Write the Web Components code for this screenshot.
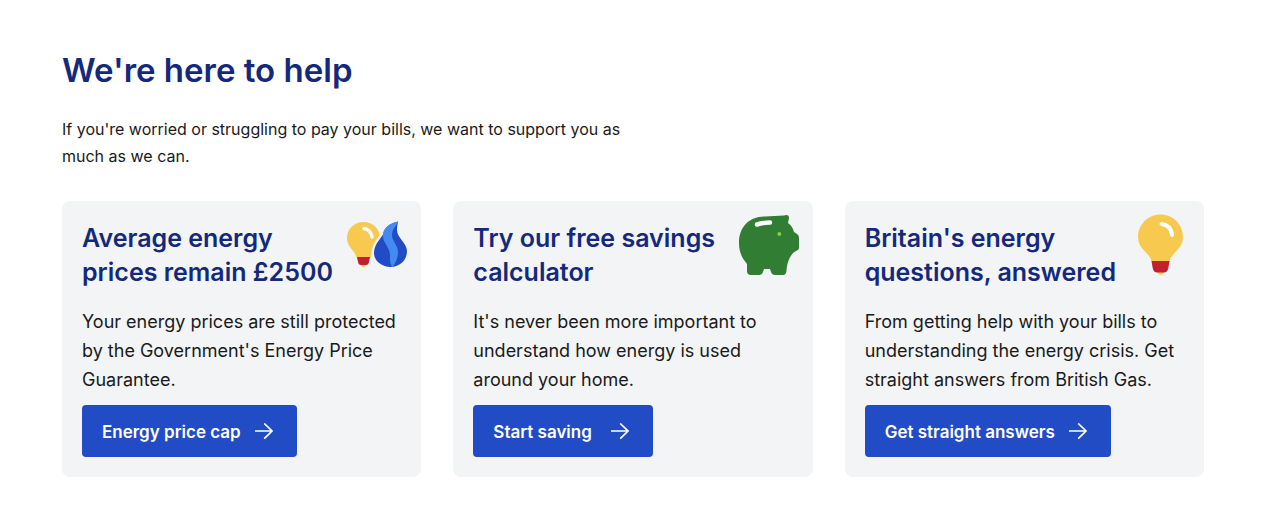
<!DOCTYPE html>
<html lang="en">
<head>
<meta charset="utf-8">
<meta name="viewport" content="width=device-width, initial-scale=1">
<title>We're here to help</title>
<style>
  body { margin: 0; background: #fff; color: #1a1a1a; font-family: Inter, "Liberation Sans", sans-serif; }
</style>
</head>
<body>
<help-section>
  <span slot="heading">We're here to help</span>
  <span slot="intro">If you're worried or struggling to pay your bills, we want to support you as<br>much as we can.</span>
  <help-card>
    <span slot="title">Average energy<br>prices remain £2500</span>
    <energy-icon slot="icon" name="bulb-flame"></energy-icon>
    <span slot="text">Your energy prices are still protected<br>by the Government's Energy Price<br>Guarantee.</span>
    <action-link slot="action">Energy price cap</action-link>
  </help-card>
  <help-card>
    <span slot="title">Try our free savings<br>calculator</span>
    <energy-icon slot="icon" name="piggy"></energy-icon>
    <span slot="text">It's never been more important to<br>understand how energy is used<br>around your home.</span>
    <action-link slot="action">Start saving</action-link>
  </help-card>
  <help-card>
    <span slot="title">Britain's energy<br>questions, answered</span>
    <energy-icon slot="icon" name="bulb"></energy-icon>
    <span slot="text">From getting help with your bills to<br>understanding the energy crisis. Get<br>straight answers from British Gas.</span>
    <action-link slot="action">Get straight answers</action-link>
  </help-card>
</help-section>

<script>
  class BaseElement extends HTMLElement {
    constructor() {
      super();
      this.attachShadow({ mode: "open" });
    }
    connectedCallback() {
      this.shadowRoot.innerHTML = this.render();
    }
  }

  customElements.define("help-section", class extends BaseElement {
    render() {
      return `
        <style>
          :host { display: block; padding: 48px 76px 46px 62px; }
          h2 { margin: 0 0 24px; color: #15297c; font-size: 33px; font-weight: 600; line-height: 44px; }
          p { margin: 0 0 31px; font-size: 16px; line-height: 27px; }
          .cards { display: grid; grid-template-columns: repeat(3, minmax(0, 1fr)); gap: 32px; }
          @media (max-width: 1100px) { .cards { grid-template-columns: 1fr; } }
        </style>
        <section>
          <h2><slot name="heading"></slot></h2>
          <p><slot name="intro"></slot></p>
          <div class="cards"><slot></slot></div>
        </section>`;
    }
  });

  customElements.define("help-card", class extends BaseElement {
    render() {
      return `
        <style>
          :host { display: block; position: relative; box-sizing: border-box; padding: 20px; border-radius: 8px; background: #f2f4f6; }
          h3 { margin: 0 0 18px; color: #15297c; font-size: 25px; font-weight: 600; line-height: 34px; white-space: nowrap; }
          p { margin: 0 0 11px; font-size: 18px; line-height: 29px; }
          .icon { position: absolute; top: 13px; right: 13px; }
        </style>
        <h3><slot name="title"></slot></h3>
        <div class="icon"><slot name="icon"></slot></div>
        <p><slot name="text"></slot></p>
        <slot name="action"></slot>`;
    }
  });

  customElements.define("action-link", class extends BaseElement {
    render() {
      return `
        <style>
          :host { display: flex; }
          a { display: flex; align-items: center; justify-content: space-between; gap: 14px; box-sizing: border-box;
              min-width: 180px; padding: 13px 24px 11px 20px; border-radius: 4px; background: #224bc6; color: #fff;
              font-size: 17px; font-weight: 600; line-height: 28px; text-decoration: none; white-space: nowrap; }
          svg { display: block; }
        </style>
        <a href="#"><slot></slot>
          <svg width="18" height="18" viewBox="0 0 18 18" fill="none" stroke="#fff" stroke-width="1.7" aria-hidden="true"><path d="M0 8H17M9.2 0.5L17 8L9.2 15.7"/></svg>
        </a>`;
    }
  });

  const icons = {
    "bulb-flame": `
      <path fill="#f8c94f" d="M17.500 8C8 8 1 15 1 24C1 34 9 36 10.500 43.500L15 51Q17.500 55.500 20 51L24.500 43.500C26 36 34 34 34 24C34 15 27 8 17.500 8Z"/>
      <path fill="#c2202f" d="M11 43H24L23 48Q22.500 51 20 51H15Q12.500 51 12 48Z"/>
      <path d="M18 14.500Q24.500 15.500 26 23" fill="none" stroke="#fff" stroke-width="3.500" stroke-linecap="round"/>
      <path fill="#224bc6" stroke="#f2f4f6" stroke-width="5" paint-order="stroke" d="M52 7.500C45 9 40 12 38 18C37 23 28 29 28 39C28 47 36 53 44.500 53C54 53 61 46 61 37C61 29 51 24 51 16Q51 12 52 7.500Z"/>
      <path fill="#438bf0" d="M52 7.500C42 10 36 15 37 23C38 30 45 35 44 43Q43.500 49 46 53C49 51 52 44 52 38C52 31 46 27 46 21C46 15 50 13 52 7.500Z"/>`,
    piggy: `
      <path fill="#327d34" d="M46 1.500Q51 0 51 4L50 9C53 11 55 14 56 18L59 20Q61 21 61 24V34Q61 36 58 37L55 39C51 44 49 49 48.500 57Q48 61 45 61H37Q34 61 33 58L32 55H26L25 58Q24 61 21 61H13Q9 61 9 57V50C4 44 1 38 1 29C1 12 12 2.500 27 2.500Z"/>
      <path d="M19 10.500Q25 8.500 32 8.500" fill="none" stroke="#fff" stroke-width="4.500" stroke-linecap="round"/>
      <circle cx="41.300" cy="20" r="2" fill="#87ce3d"/>`,
    bulb: `
      <path fill="#f8c94f" d="M31.500 0.500C19 0.500 9 10.500 9 23C9 35 20 38 22.500 47L28 58Q31.500 64 35 58L40.500 47C43 38 54 35 54 23C54 10.500 44 0.500 31.500 0.500Z"/>
      <path fill="#c2202f" d="M22.500 47H40.500L39.500 53Q39 58.500 34.500 58.500H28.500Q24 58.500 23.500 53Z"/>
      <path d="M32.500 10Q42 11 43 21" fill="none" stroke="#fff" stroke-width="4" stroke-linecap="round"/>`
  };

  customElements.define("energy-icon", class extends BaseElement {
    render() {
      return `
        <style>:host { display: block; } svg { display: block; }</style>
        <svg width="62" height="62" viewBox="0 0 62 62" aria-hidden="true">${icons[this.getAttribute("name")]}</svg>`;
    }
  });
</script>
</body>
</html>
